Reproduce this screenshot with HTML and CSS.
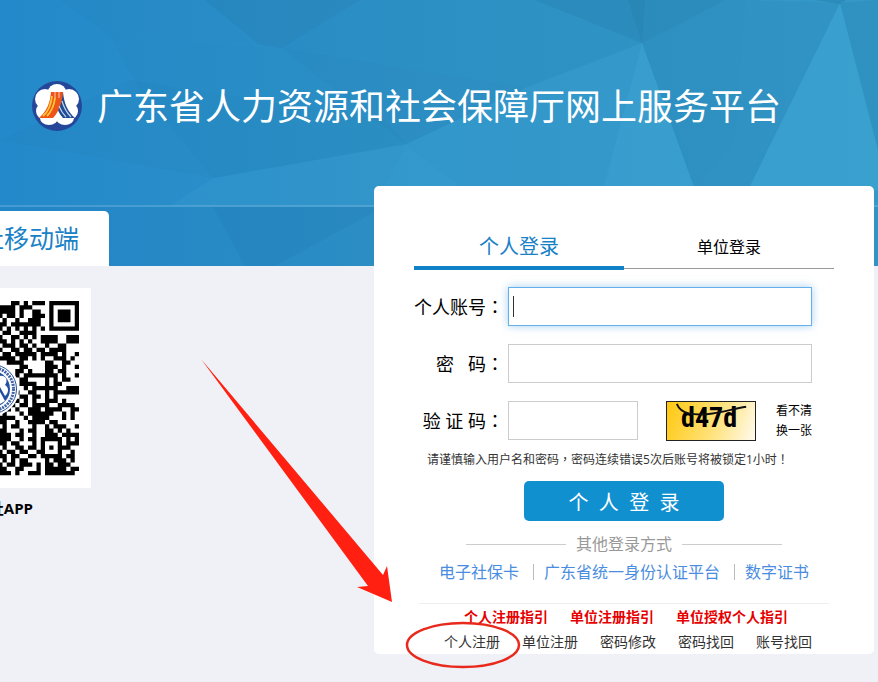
FILE: index.html
```
<!DOCTYPE html>
<html lang="zh-CN">
<head>
    <meta charset="UTF-8">
    <meta name="viewport" content="width=device-width, initial-scale=1.0">
    <title>广东省人力资源和社会保障厅网上服务平台</title>
    <link rel="stylesheet" href="styles.css">
</head>
<body>
    <svg class="banner" viewBox="0 0 878 266" preserveAspectRatio="none" aria-hidden="true">
        <defs>
            <linearGradient id="sky" x1="0" y1="0" x2="1" y2="0">
                <stop offset="0" stop-color="#2489ca"/>
                <stop offset="0.5" stop-color="#2f93c8"/>
                <stop offset="1" stop-color="#3499c8"/>
            </linearGradient>
        </defs>
        <rect width="878" height="266" fill="url(#sky)"/>
        <g fill="#1c6f9c">
            <polygon points="205,0 360,0 282,48 260,45" fill-opacity="0.2"/>
            <polygon points="110,36 60,0 205,0 260,45" fill-opacity="0.06"/>
            <polygon points="360,0 535,0 642,43 525,88 406,144 282,48" fill-opacity="0.07"/>
            <polygon points="110,36 282,48 406,144 213,178 140,90" fill-opacity="0.05"/>
            <polygon points="282,48 406,144 525,88" fill-opacity="0.03"/>
            <polygon points="0,140 213,178 406,144 385,120 130,80" fill-opacity="0.06"/>
            <polygon points="535,0 725,0 642,43" fill-opacity="0.26"/>
            <polygon points="628,0 645,0 642,43" fill-opacity="0.16"/>
            <polygon points="642,43 725,0 745,0 735,140 695,190" fill-opacity="0.14"/>
            <polygon points="745,0 840,3 748,190 695,190 735,140" fill-opacity="0.1"/>
            <polygon points="815,0 846,0 840,4" fill-opacity="0.3"/>
            <polygon points="840,3 878,0 878,150" fill-opacity="0.16"/>
        </g>
        <g fill="#4fb8e0">
            <polygon points="642,43 603,190 695,190" fill-opacity="0.24"/>
            <polygon points="642,43 525,88 406,144 465,190 603,190" fill-opacity="0.1"/>
            <polygon points="840,3 748,190 878,190 878,150" fill-opacity="0.24"/>
            <polygon points="213,178 406,144 374,206 170,206" fill-opacity="0.12"/>
            <polygon points="406,144 465,190 374,206" fill-opacity="0.18"/>
        </g>
        <rect y="207" width="878" height="59" fill="#1b6fa8" fill-opacity="0.1"/>
        <polygon points="213,207 374,207 374,212 275,266 245,266" fill="#1b6fa8" fill-opacity="0.16"/>
        <rect y="205" width="878" height="2" fill="#fff" fill-opacity="0.15"/>
    </svg>

    <header class="header">
        <svg class="logo" viewBox="0 0 50 50" aria-hidden="true">
            <circle cx="25" cy="25" r="25" fill="#24479a"/>
            <g fill="#fff">
                <ellipse cx="25" cy="11" rx="9" ry="8"/>
                <circle cx="13" cy="18" r="10"/>
                <circle cx="37" cy="18" r="10"/>
                <circle cx="13" cy="30" r="9"/>
                <circle cx="37" cy="30" r="9"/>
                <ellipse cx="17" cy="37" rx="9" ry="7"/>
                <ellipse cx="33" cy="37" rx="9" ry="7"/>
                <circle cx="25" cy="24" r="12"/>
            </g>
            <path d="M21 11h10c1 12 5 20 12 26H31c-4-4-6-9-7-15z" fill="#214a94"/>
            <path d="M19 11h12c-1 12-5 21-10 26H7c8-7 11-15 12-26z" fill="#ee5418"/>
            <path d="M20 15c-1 9-4 16-9 20M23 17c-1 8-4 14-8 18" fill="none" stroke="#ffc83a" stroke-width="1.8"/>
            <path d="M23 11v6M27 11v6" stroke="#fff" stroke-width="0.7"/>
            <path d="M27 25c2 5 4 8 7 11M30 20c2 7 5 12 9 16" fill="none" stroke="#bcd7ef" stroke-width="1.2"/>
        </svg>
        <h1 class="title">广东省人力资源和社会保障厅网上服务平台</h1>
    </header>

    <main class="main">
        <section class="mobile">
            <h2 class="mobile-tab">社移动端</h2>
            <svg class="qr" viewBox="0 0 91 200" aria-hidden="true">
                <rect width="91" height="200" fill="#fff"/>
                <path id="qrCode"/>
                <circle cx="-8" cy="101" r="27" fill="#fff"/>
                <circle cx="-8" cy="101" r="24.5" fill="none" stroke="#2b4f9c" stroke-width="1"/>
                <circle cx="-8" cy="101" r="21.5" fill="none" stroke="#3f62a8" stroke-width="3" stroke-dasharray="2 1"/>
                <circle cx="-8" cy="101" r="18" fill="#2450a0"/>
                <path d="M0 88c5-1 9 4 5 9 4 2 4 8 0 11L0 99z" fill="#fff"/>
                <path d="M0 104l5 9-5 3z" fill="#fff"/>
            </svg>
            <p class="app-name">社APP</p>
        </section>

        <section class="card">
            <div class="tabs">
                <button type="button" class="tab active">个人登录</button>
                <button type="button" class="tab">单位登录</button>
            </div>

            <form class="form">
                <div class="row">
                    <label for="account">个人账号<span class="mark" lang="zh-TW">：</span></label>
                    <input type="text" id="account" class="focused">
                </div>
                <div class="row">
                    <label for="password">密&nbsp;&nbsp;&nbsp;码<span class="mark" lang="zh-TW">：</span></label>
                    <input type="password" id="password">
                </div>
                <div class="row">
                    <label for="captcha">验&nbsp;证&nbsp;码<span class="mark" lang="zh-TW">：</span></label>
                    <input type="text" id="captcha" class="short">
                    <div class="captcha">
                        <span>d47d</span>
                        <svg viewBox="0 0 90 40" aria-hidden="true">
                            <path d="M9 2c2 5 5 8 12 10 20 4 38-3 61-7" fill="none" stroke="#111" stroke-width="2"/>
                        </svg>
                    </div>
                    <a href="#" class="refresh">看不清<br>换一张</a>
                </div>
                <p class="hint">请谨慎输入用户名和密码<span class="mark" lang="zh-TW">，</span>密码连续错误5次后账号将被锁定1小时<span class="mark" lang="zh-TW">！</span></p>
                <button type="submit" class="submit">个&nbsp;&nbsp;人&nbsp;&nbsp;登&nbsp;&nbsp;录</button>
            </form>

            <div class="other">其他登录方式</div>
            <nav class="methods">
                <a href="#">电子社保卡</a>
                <a href="#">广东省统一身份认证平台</a>
                <a href="#">数字证书</a>
            </nav>
            <nav class="guides">
                <a href="#">个人注册指引</a>
                <a href="#">单位注册指引</a>
                <a href="#">单位授权个人指引</a>
            </nav>
            <nav class="links">
                <a href="#">个人注册</a>
                <a href="#">单位注册</a>
                <a href="#">密码修改</a>
                <a href="#">密码找回</a>
                <a href="#">账号找回</a>
            </nav>

            <!-- 指向个人注册的箭头和圆圈 -->
            <svg class="pointer" viewBox="0 0 340 320" aria-hidden="true">
                <polygon points="0,0 182,216 186,207 191,243 156,228 167,227" fill="#ff2012"/>
                <ellipse cx="262" cy="286" rx="56" ry="22" fill="none" stroke="#e8291c" stroke-width="2.5"/>
            </svg>
        </section>
    </main>

    <script>
        const rows = [
            '...##.#.###.#######',
            '####.###....#.....#',
            '####.#..##..#.###.#',
            '#.##.#..###.#.###.#',
            '.#..#..###..#.###.#',
            '##.#######..#.....#',
            '#.#.#.#.#.#.#######',
            '.##..####..........',
            '#..##.#.#.####..###',
            '##.#.#.#..####..###',
            '.###.##.#..#..##...',
            '#..##.##.##.####...',
            '.##.#####.####.#..#',
            '####.##.#.#..###.#.',
            '..####.....##..##..',
            '.....##....###.#..#',
            '....##.#...##.##...',
            '....#.########.#..#',
            '.....##....#.#.##..',
            '.....####..#.##....',
            '......#.######..###',
            '....#..##..#.######',
            '.....##.##.#.#.....',
            '....#.#.#..###.#...',
            '...#.##.####..####.',
            '..#.#..###.####..##',
            '.#...#.######..#.#.',
            '####..#.####...#.#.',
            '##..#..####.##.....',
            '.#.##...#..#.###..#',
            '##...#.##..##.#.#..',
            '###.##..#..###.####',
            '###..#.##.#####.#.#',
            '##.##...#.#...#.###',
            '.#..##.##.#.#.###..',
            '#.##.##..##...#..#.',
            '##.##..##.#####.##.',
            '.#.#.##....#.###.#.',
            '#.##.###.#.##.###..',
            '##..##...#.#####.##',
            '###.#..###.#######.'
        ];
        const size = 4.25;
        let d = '';

        rows.forEach((row, y) => {
            [...row].forEach((cell, x) => {
                if (cell === '#') {
                    d += `M${x * size - 1.75} ${y * size + 13}h${size}v${size}h-${size}z`;
                }
            });
        });
        document.getElementById('qrCode').setAttribute('d', d);
    </script>
</body>
</html>
```
FILE: styles.css
```
* {
    box-sizing: border-box;
}
body {
    position: relative;
    margin: 0;
    min-height: 100vh;
    background: #eff1f7;
    color: #000;
    font-family: "Open Sans", "Noto Sans CJK SC", sans-serif;
    font-size: 14px;
}
h1, h2, p {
    margin: 0;
    font-weight: normal;
}
a {
    color: inherit;
    text-decoration: none;
}
button, input {
    font-family: inherit;
}
.banner {
    position: absolute;
    top: 0;
    left: 0;
    width: 100%;
    height: 266px;
    z-index: -1;
}
.header {
    display: flex;
    align-items: center;
    gap: 15px;
    height: 186px;
    padding: 26px 32px 0;
}
.logo {
    width: 50px;
    height: 50px;
    flex: none;
}
.title {
    padding-top: 2px;
    color: #fff;
    font-size: 36px;
    line-height: 48px;
    white-space: nowrap;
}
.main {
    display: flex;
    justify-content: space-between;
    align-items: flex-start;
    padding-right: 4px;
}
.mobile {
    width: 109px;
    margin-top: 25px;
    overflow: hidden;
}
.mobile-tab {
    display: flex;
    justify-content: flex-end;
    padding-right: 30px;
    background: #fff;
    border-radius: 0 5px 0 0;
    color: #1a81c6;
    font-size: 25px;
    line-height: 55px;
    white-space: nowrap;
}
.qr {
    display: block;
    width: 91px;
    height: 200px;
    margin-top: 22px;
}
.app-name {
    display: flex;
    justify-content: flex-end;
    margin-top: 10px;
    padding-right: 76px;
    font-size: 15px;
    font-weight: bold;
    line-height: 20px;
    white-space: nowrap;
}
.card {
    position: relative;
    width: 500px;
    padding: 38px 40px 0;
    background: #fff;
    border-radius: 5px;
}
.tabs {
    display: flex;
    height: 46px;
}
.tab {
    flex: 1;
    margin-bottom: 1px;
    padding: 0;
    background: none;
    border: none;
    border-bottom: 1px solid #999;
    font-size: 16px;
    cursor: pointer;
}
.tab.active {
    margin-bottom: 0;
    border-bottom: 4px solid #0f82c8;
    color: #1a81c6;
    font-size: 20px;
}
.form {
    display: flex;
    flex-direction: column;
    gap: 18px;
    padding: 17px 22px 0 0;
}
.row {
    display: flex;
    align-items: center;
    height: 39px;
}
.row label {
    width: 90px;
    margin-right: 4px;
    padding-bottom: 2px;
    font-size: 18px;
    text-align: right;
    white-space: nowrap;
}
.mark {
    font-family: "Noto Sans CJK TC", sans-serif;
}
.row input {
    flex: 1;
    min-width: 0;
    height: 39px;
    padding: 0 6px;
    background: #fff;
    border: 1px solid #ccc;
    font-size: 16px;
    outline: none;
}
.row input.focused {
    background: linear-gradient(#333, #333) 4px 8px / 1px 21px no-repeat #fff;
    border-color: #66afe9;
    box-shadow: 0 0 8px rgba(102, 175, 233, 0.6);
}
.row input.short {
    flex: none;
    width: 130px;
}
.captcha {
    position: relative;
    width: 90px;
    height: 40px;
    margin-left: 28px;
    padding-left: 14px;
    border: 1px solid #222;
    background: linear-gradient(110deg, #ffc80f, #ffe27a 55%, #fffbee);
    font-family: "Liberation Sans Narrow", "Roboto Condensed", Roboto, sans-serif;
    font-size: 28px;
    font-weight: bold;
    line-height: 32px;
}
.captcha svg {
    position: absolute;
    top: 0;
    left: 0;
    width: 100%;
    height: 100%;
}
.refresh {
    margin-left: auto;
    font-size: 12px;
    line-height: 20px;
}
.hint {
    margin-top: -9px;
    padding-left: 13px;
    color: #333;
    font-size: 12px;
    line-height: 20px;
    white-space: nowrap;
}
.submit {
    width: 200px;
    height: 40px;
    margin: -7px 0 0 110px;
    background: #1190d0;
    border: none;
    border-radius: 5px;
    color: #fff;
    font-size: 20px;
    cursor: pointer;
}
.other {
    display: flex;
    justify-content: center;
    align-items: center;
    gap: 10px;
    margin-top: 11px;
    color: #999;
    font-size: 16px;
    line-height: 24px;
}
.other::before,
.other::after {
    content: "";
    width: 100px;
    height: 1px;
    background: #ccc;
}
.methods {
    display: flex;
    justify-content: center;
    margin-top: 4px;
    color: #4a8de0;
    font-size: 16px;
    line-height: 24px;
    white-space: nowrap;
}
.methods a + a {
    display: flex;
    align-items: center;
}
.methods a + a::before {
    content: "";
    width: 1px;
    height: 16px;
    margin: 0 10px 0 14px;
    background: #bbb;
}
.guides {
    display: flex;
    justify-content: center;
    gap: 22px;
    margin: 19px 5px 0;
    padding: 3px 0 0 4px;
    border-top: 1px solid #eee;
    color: #e60000;
    font-weight: bold;
    line-height: 20px;
    white-space: nowrap;
}
.links {
    display: flex;
    justify-content: flex-end;
    gap: 22px;
    padding: 4px 22px 2px 0;
    color: #333;
    line-height: 21px;
    white-space: nowrap;
}
.pointer {
    position: absolute;
    top: 173px;
    left: -173px;
    width: 340px;
    height: 320px;
    pointer-events: none;
}
```
